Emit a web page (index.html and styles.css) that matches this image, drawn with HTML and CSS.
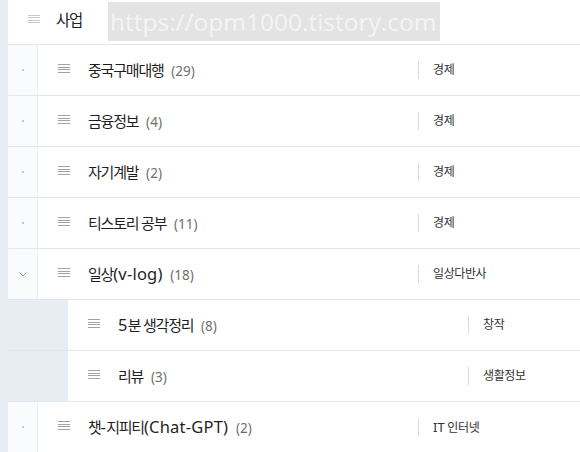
FILE: index.html
```html
<!DOCTYPE html>
<html lang="ko">
<head>
  <meta charset="UTF-8" />
  <meta name="viewport" content="width=device-width, initial-scale=1.0"/>
  <title>카테고리 관리</title>
  <link rel="stylesheet" href="styles.css">
</head>
<body>

  <div class="list">
    <div class="head">
      <span class="grip"><i></i><i></i><i></i><i></i></span>
      <span class="head-name">사업</span>
      <span class="watermark">https://opm1000.tistory.com</span>
    </div>

    <div class="row">
      <div class="toggle"><span class="dot"></span></div>
      <div class="cell">
        <span class="grip"><i></i><i></i><i></i><i></i></span>
        <span class="name">중국구매대행 <em class="count">(29)</em></span>
        <span class="cat">경제</span>
      </div>
    </div>

    <div class="row">
      <div class="toggle"><span class="dot"></span></div>
      <div class="cell">
        <span class="grip"><i></i><i></i><i></i><i></i></span>
        <span class="name">금융정보 <em class="count">(4)</em></span>
        <span class="cat">경제</span>
      </div>
    </div>

    <div class="row">
      <div class="toggle"><span class="dot"></span></div>
      <div class="cell">
        <span class="grip"><i></i><i></i><i></i><i></i></span>
        <span class="name">자기계발 <em class="count">(2)</em></span>
        <span class="cat">경제</span>
      </div>
    </div>

    <div class="row">
      <div class="toggle"><span class="dot"></span></div>
      <div class="cell">
        <span class="grip"><i></i><i></i><i></i><i></i></span>
        <span class="name">티스토리 공부 <em class="count">(11)</em></span>
        <span class="cat">경제</span>
      </div>
    </div>

    <div class="row">
      <div class="toggle">
        <svg class="chevron" width="8" height="5" viewBox="0 0 8 5"><path d="M0.5 0.5 L4 4 L7.5 0.5" fill="none" stroke="#9aa0a8" stroke-width="1"/></svg>
      </div>
      <div class="cell">
        <span class="grip"><i></i><i></i><i></i><i></i></span>
        <span class="name">일상<span class="lat">(v-log)</span> <em class="count">(18)</em></span>
        <span class="cat">일상다반사</span>
      </div>
    </div>

    <div class="row sub">
      <div class="cell">
        <span class="grip"><i></i><i></i><i></i><i></i></span>
        <span class="name"><span class="lat">5</span>분 생각정리 <em class="count">(8)</em></span>
        <span class="cat">창작</span>
      </div>
    </div>

    <div class="row sub">
      <div class="cell">
        <span class="grip"><i></i><i></i><i></i><i></i></span>
        <span class="name">리뷰 <em class="count">(3)</em></span>
        <span class="cat">생활정보</span>
      </div>
    </div>

    <div class="row">
      <div class="toggle"><span class="dot"></span></div>
      <div class="cell">
        <span class="grip"><i></i><i></i><i></i><i></i></span>
        <span class="name">챗<span class="lat">-</span>지피티<span class="lat">(Chat-GPT)</span> <em class="count">(2)</em></span>
        <span class="cat"><span class="lat">IT</span> 인터넷</span>
      </div>
    </div>
  </div>

</body>
</html>
```

FILE: styles.css
```css
body {
  margin: 0;
  padding: 0;
  background: #e8ecf3;
  font-family: "Noto Sans", "Noto Sans CJK KR", sans-serif;
  color: #222;
  overflow: hidden;
}

.list {
  margin-left: 8px;
  background: #e8ecf3;
}

/* top row, partly scrolled out */
.head {
  height: 38px;
  padding-bottom: 6px;
  display: flex;
  align-items: center;
  background: #fff;
  border-bottom: 1px solid #e1e5ec;
  padding-left: 20px;
  position: relative;
}

.head-name {
  margin-left: 16px;
  font-size: 15.5px;
  letter-spacing: -1.2px;
  color: #222;
}

.watermark {
  position: absolute;
  left: 100px;
  top: 2px;
  width: 332px;
  height: 39px;
  box-sizing: border-box;
  padding-left: 2px;
  background: #e3e3e3;
  color: #f4f4f4;
  font-family: "Open Sans", sans-serif;
  font-size: 24.5px;
  line-height: 39px;
  white-space: nowrap;
  overflow: hidden;
}

.row {
  display: flex;
  height: 50px;
  border-bottom: 1px solid #e1e5ec;
}

.toggle {
  width: 29px;
  flex: none;
  display: flex;
  align-items: center;
  justify-content: center;
  background: #fafbfc;
  border-right: 1px solid #eceff3;
}

.dot {
  width: 2px;
  height: 2px;
  background: #c4c8ce;
}

.chevron {
  display: block;
}

.cell {
  flex: 1;
  display: flex;
  align-items: center;
  padding-left: 20px;
  background: #fff;
}

.sub {
  padding-left: 60px;
}

.grip {
  width: 12px;
  flex: none;
  display: flex;
  flex-direction: column;
  gap: 1.67px;
  margin-bottom: 3px;
}

.grip i {
  display: block;
  height: 1px;
  background: #9fa3a9;
}

.head .grip {
  margin-bottom: 0;
}

.head .grip i {
  background: #c4c7cc;
}

.name {
  flex: 0 0 330px;
  margin-left: 18px;
  margin-bottom: 2px;
  font-size: 15px;
  letter-spacing: -1.2px;
  white-space: nowrap;
  color: #1f1f1f;
}

.sub .name {
  flex-basis: 350px;
}

.lat {
  font-size: 16.5px;
  letter-spacing: 0.2px;
}

.count {
  font-style: normal;
  font-size: 13.5px;
  letter-spacing: 0;
  color: #6f6f6f;
  margin-left: 5px;
}

.cat {
  border-left: 1px solid #d6dbe2;
  height: 18px;
  line-height: 18px;
  padding-left: 14px;
  font-size: 12px;
  letter-spacing: -0.4px;
  color: #333;
  white-space: nowrap;
}

.cat .lat {
  font-size: 13px;
  letter-spacing: 0;
}
```
